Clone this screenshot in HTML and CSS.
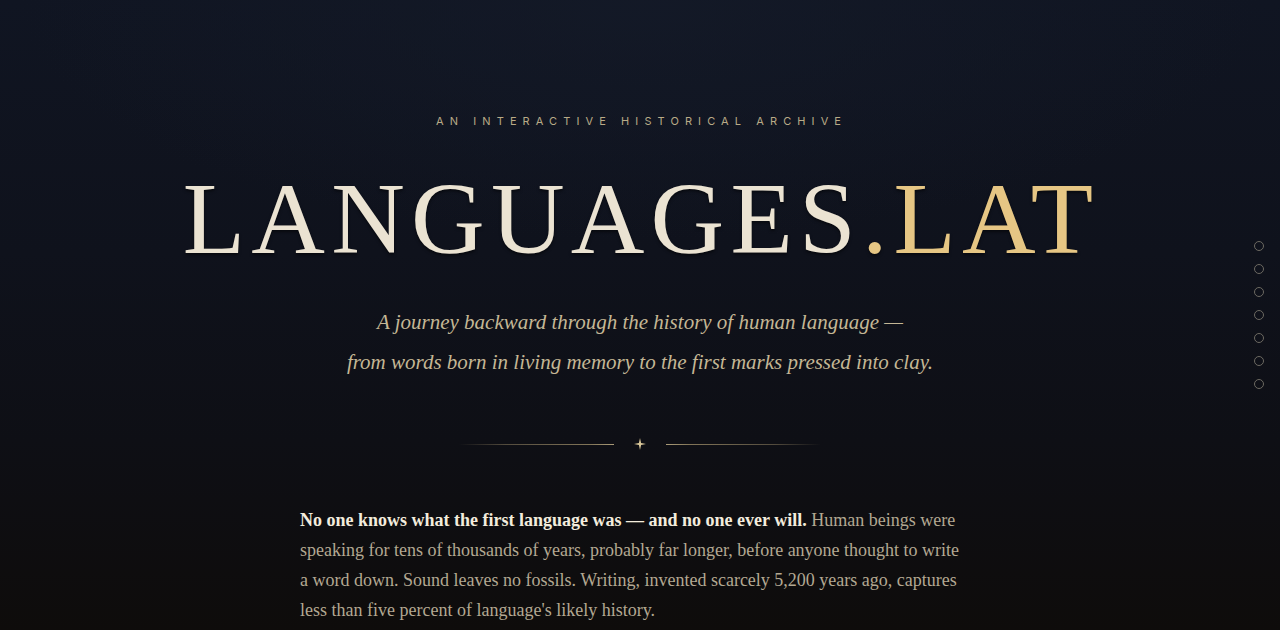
FILE: index.html
```html
<!DOCTYPE html>
<html lang="en">
<head>
<meta charset="utf-8">
<title>Languages.lat</title>
<link rel="stylesheet" href="styles.css">
</head>
<body>
<nav class="dots">
  <span class="dot"></span><span class="dot"></span><span class="dot"></span><span class="dot"></span><span class="dot"></span><span class="dot"></span><span class="dot"></span>
</nav>
<main class="hero">
  <p class="eyebrow">An Interactive Historical Archive</p>
  <h1 class="title">LANGUAGES<span class="accent">.LAT</span></h1>
  <p class="lede">A journey backward through the history of human language —<br>from words born in living memory to the first marks pressed into clay.</p>
  <div class="divider">
    <span class="rule rule-left"></span>
    <svg class="star" width="12" height="12" viewBox="0 0 12 12"><path d="M6 0 L7.1 4.9 L12 6 L7.1 7.1 L6 12 L4.9 7.1 L0 6 L4.9 4.9 Z" fill="#d9c79a"/></svg>
    <span class="rule rule-right"></span>
  </div>
  <p class="intro"><strong>No one knows what the first language was — and no one ever will.</strong> Human beings were speaking for tens of thousands of years, probably far longer, before anyone thought to write a word down. Sound leaves no fossils. Writing, invented scarcely 5,200 years ago, captures less than five percent of language's likely history.</p>
</main>
</body>
</html>
```
FILE: styles.css
```css
html, body {
  margin: 0;
  padding: 0;
  height: 100%;
}
body {
  background:
    radial-gradient(ellipse 620px 240px at 50% 0%, rgba(20, 26, 40, 0.8), rgba(20, 26, 40, 0) 100%),
    linear-gradient(180deg, #101522 0%, #0f121c 40%, #0e0f15 70%, #0e0c0b 100%);
  color: #e9e1cf;
  font-family: "Liberation Serif", "Times New Roman", serif;
  overflow: hidden;
}
.hero {
  display: flex;
  flex-direction: column;
  align-items: center;
  padding-top: 113px;
}
.eyebrow {
  margin: 0;
  font-family: Inter, "Liberation Sans", sans-serif;
  font-size: 11px;
  line-height: 16px;
  letter-spacing: 6.1px;
  text-transform: uppercase;
  color: #b9ab87;
  padding-left: 3px;
}
.title {
  margin: 36px 0 0;
  font-family: "Liberation Serif", "Times New Roman", serif;
  font-weight: 400;
  font-size: 102px;
  line-height: 108px;
  letter-spacing: 6.2px;
  padding-left: 2px;
  color: #ebe3d2;
  text-shadow: 0 2px 3px rgba(0,0,0,0.5);
}
.accent {
  color: #e6c684;
}
.lede {
  margin: 29px 0 0;
  font-family: "Liberation Serif", "Times New Roman", serif;
  font-style: italic;
  font-size: 21px;
  line-height: 40px;
  text-align: center;
  color: #c4b795;
}
.divider {
  display: flex;
  align-items: center;
  gap: 20px;
  margin-top: 56px;
}
.rule {
  display: block;
  width: 155px;
  height: 1px;
}
.rule-left {
  background: linear-gradient(90deg, rgba(140,125,95,0) 0%, rgba(140,125,95,0.55) 30%, rgba(150,135,100,0.85) 85%, rgba(170,155,120,1) 100%);
}
.rule-right {
  background: linear-gradient(270deg, rgba(140,125,95,0) 0%, rgba(140,125,95,0.55) 30%, rgba(150,135,100,0.85) 85%, rgba(170,155,120,1) 100%);
}
.star {
  display: block;
}
.intro {
  margin: 55px 0 0;
  width: 665px;
  padding-right: 15px;
  font-family: "Liberation Serif", "Times New Roman", serif;
  font-size: 18px;
  line-height: 30px;
  color: #b3a892;
}
.intro strong {
  font-weight: 700;
  color: #f3ecdd;
}
.dots {
  position: fixed;
  right: 16px;
  top: 241px;
  display: flex;
  flex-direction: column;
  gap: 13px;
}
.dot {
  display: block;
  width: 8px;
  height: 8px;
  border: 1px solid #6d6a62;
  border-radius: 50%;
}
```
